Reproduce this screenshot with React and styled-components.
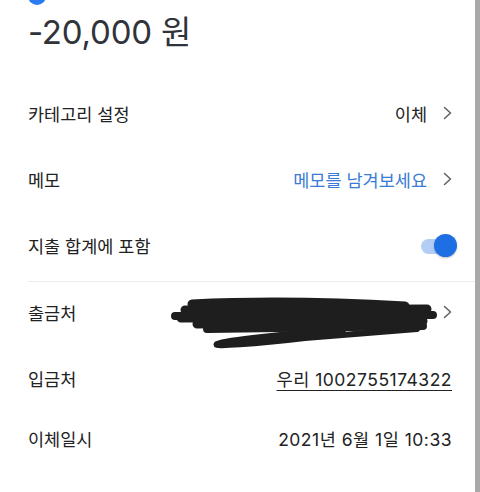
import styled, { createGlobalStyle } from "styled-components"

const GlobalStyle = createGlobalStyle`
  html, body {
    margin: 0;
    padding: 0;
    background: #ffffff;
  }
  body {
    font-family: "Inter", "Noto Sans CJK KR", sans-serif;
    color: #222222;
  }
`

const Screen = styled.div`
  display: flex;
  width: 480px;
  height: 492px;
  overflow: hidden;
  background: #ffffff;
`

const Content = styled.div`
  flex: 1;
  display: flex;
  flex-direction: column;
  padding-left: 28px;
`

const ScrollBar = styled.div`
  width: 5px;
  background: #a8a8a8;
`

const TopIcon = styled.div`
  width: 18px;
  height: 18px;
  border-radius: 50%;
  background: #2b7cf2;
  margin-top: -13px;
`

const Amount = styled.div`
  font-size: 33px;
  line-height: 40px;
  margin-top: 7px;
  color: #30343a;
  letter-spacing: -0.2px;
`

const Section = styled.div`
  display: flex;
  flex-direction: column;
  padding-right: 23px;
  margin-top: ${p => p.$top || 0}px;
`

const Divider = styled.div`
  height: 1px;
  background: #ececec;
  margin-top: 2px;
`

const Row = styled.div`
  position: relative;
  display: flex;
  align-items: center;
  justify-content: space-between;
  height: ${p => p.$h}px;
`

const Label = styled.span`
  font-size: 17.5px;
  color: #222222;
`

const Value = styled.div`
  display: flex;
  align-items: center;
  gap: 16px;
  font-size: 17.5px;
  letter-spacing: ${p => (p.$wide ? "0.5px" : "0")};
  color: ${p => (p.$blue ? "#3a7bd5" : "#222222")};
`

const Underlined = styled.span`
  text-decoration: underline;
  text-underline-offset: 4px;
  text-decoration-thickness: 1px;
`

const Toggle = styled.div`
  position: relative;
  width: 36px;
  height: 24px;
  margin-right: -5px;
`

const Track = styled.div`
  position: absolute;
  left: 0;
  top: 5px;
  width: 30px;
  height: 15px;
  border-radius: 8px;
  background: #b4cdf4;
`

const Knob = styled.div`
  position: absolute;
  right: 0;
  top: 0;
  width: 23px;
  height: 23px;
  border-radius: 50%;
  background: #1d6fe3;
  box-shadow: 0 1px 2px rgba(0, 0, 0, 0.25);
`

const Scribble = styled.svg`
  position: absolute;
  left: 137px;
  top: 11px;
`

function Chevron() {
  return (
    <svg width="9" height="14" viewBox="0 0 9 14" fill="none">
      <path d="M1.5 1.5 L7.5 7 L1.5 12.5" stroke="#5f5f5f" strokeWidth="1.5" strokeLinecap="round" strokeLinejoin="round" />
    </svg>
  )
}

export default function App() {
  return (
    <>
      <GlobalStyle />
      <Screen>
        <Content>
          <TopIcon />
          <Amount>-20,000 원</Amount>

          <Section $top={28}>
            <Row $h={66}>
              <Label>카테고리 설정</Label>
              <Value>이체<Chevron /></Value>
            </Row>
            <Row $h={66}>
              <Label>메모</Label>
              <Value $blue>메모를 남겨보세요<Chevron /></Value>
            </Row>
            <Row $h={67}>
              <Label>지출 합계에 포함</Label>
              <Toggle>
                <Track />
                <Knob />
              </Toggle>
            </Row>
          </Section>

          <Divider />

          <Section>
            <Row $h={60}>
              <Label>출금처</Label>
              <Value><Chevron /></Value>
              <Scribble width="280" height="60" viewBox="0 0 280 60">
                <g stroke="#1e1e1e" strokeLinecap="round" strokeLinejoin="round" fill="none">
                  <path d="M27 11 C90 8 170 9 240 13" strokeWidth="9" />
                  <path d="M10 23 L268 22" strokeWidth="8" />
                  <path d="M20 17 L262 16" strokeWidth="9" />
                  <path d="M16 25 L258 24" strokeWidth="9" />
                  <path d="M32 31 L258 28" strokeWidth="9" />
                  <path d="M42 36 L258 33" strokeWidth="8" />
                  <path d="M178 37 C120 41 62 47 52 51 C46 54 90 51 140 45 L252 36" strokeWidth="6" />
                </g>
              </Scribble>
            </Row>
            <Row $h={72}>
              <Label>입금처</Label>
              <Value $wide><Underlined>우리 1002755174322</Underlined></Value>
            </Row>
            <Row $h={48}>
              <Label>이체일시</Label>
              <Value $wide>2021년 6월 1일 10:33</Value>
            </Row>
          </Section>
        </Content>
        <ScrollBar />
      </Screen>
    </>
  )
}
